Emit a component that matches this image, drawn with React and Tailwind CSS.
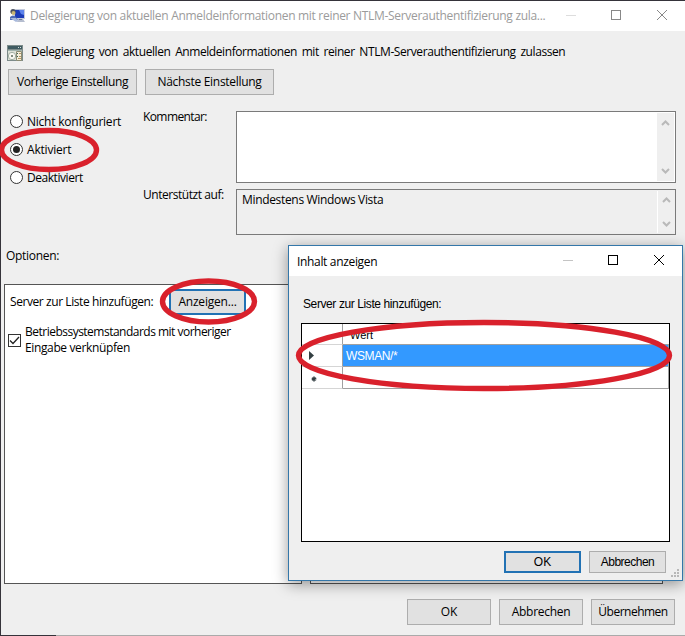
import React from 'react';
import { clsx } from 'clsx';

const ComputerIcon = () => (
  <svg width="17" height="16" viewBox="0 0 17 16" className="shrink-0">
    <path d="M5 1h11v10H5z" fill="#c5cbdc" />
    <path d="M6 2h9v8H6z" fill="#1c3cb8" />
    <path d="M10 2h5v5l-3-1z" fill="#5d83ec" />
    <path d="M9 11h5l2 3H8z" fill="#b5bdcf" />
    <path d="M10 11h3v1h-3z" fill="#707b98" />
    <circle cx="4" cy="3.5" r="2.6" fill="#4a5160" />
    <circle cx="4.5" cy="5" r="2" fill="#c9b774" />
    <path d="M1 9q3-3 6 0l2 3H1z" fill="#4e6cb6" />
    <path d="M1 10l6 4 2-1-2-3z" fill="#a8b9dc" />
  </svg>
);

const PolicyIcon = () => (
  <svg width="16" height="16" viewBox="0 0 16 16" className="shrink-0">
    <path d="M0 0h16v16H0z" fill="#7d8b8a" />
    <path d="M1 1h14v3H1z" fill="#3f5b61" />
    <path d="M11 2h1v1h-1zM13 2h1v1h-1z" fill="#d6dedb" />
    <path d="M1 5h14v10H1z" fill="#dfe3d9" />
    <path d="M1 5h14v1H1z" fill="#a3b5af" />
    <circle cx="5" cy="11" r="3.7" fill="#f7f7f0" stroke="#a2afa3" />
    <circle cx="5" cy="11" r="1" fill="#59695b" />
    <path d="M9.5 6.5h5v9h-5z" fill="#f4eed9" stroke="#8c8c74" />
    <path d="M10 8h1v1h-1zM10 11h1v1h-1z" fill="#3b6559" />
    <path d="M12 8h2v1h-2zM12 11h2v1h-2zM11 13h3v1h-3z" fill="#b49665" />
  </svg>
);

const WindowButtons = ({ color, dim }) => (
  <svg width="103" height="12" viewBox="0 0 103 12" fill="none" shapeRendering="crispEdges" className="-mt-[2px] shrink-0">
    <path d="M0 6.5h10" stroke={dim} />
    <path d="M45.5 1.5h9v9h-9z" stroke={color} />
    <path d="M91 1l10 10M101 1L91 11" stroke={color} shapeRendering="auto" />
  </svg>
);

const Button = ({ className, children }) => (
  <button
    type="button"
    className={clsx('flex shrink-0 items-center justify-center whitespace-nowrap border bg-[#e1e1e1]', className)}
  >
    {children}
  </button>
);

const Radio = ({ label, checked, className }) => (
  <label className="flex h-7 items-center gap-[4px]">
    <span className="flex size-[13px] items-center justify-center rounded-full border border-[#333] bg-white">
      {checked && <span className="size-[7px] rounded-full bg-[#222]" />}
    </span>
    <span className={clsx('pt-[2px]', className)}>{label}</span>
  </label>
);

const ScrollBar = ({ className }) => (
  <div className={clsx('flex w-[17px] flex-col items-center justify-between bg-[#efefef]', className)}>
    <svg width="9" height="6" viewBox="0 0 9 6" fill="none" stroke="#b9b9b9" strokeWidth="2">
      <path d="M1 5l3.5-3.5L8 5" />
    </svg>
    <svg width="9" height="6" viewBox="0 0 9 6" fill="none" stroke="#b9b9b9" strokeWidth="2">
      <path d="M1 1l3.5 3.5L8 1" />
    </svg>
  </div>
);

const ContentDialog = () => (
  <div className="absolute left-[288px] top-[245px] flex h-[336px] w-[395px] flex-col border border-[#3477a9] bg-[#efefef] shadow-[0_3px_14px_rgba(0,0,0,0.4)]">
    <div className="flex h-[30px] shrink-0 items-center justify-between bg-white pl-2 pr-[16px]">
      <span className="pt-[1px] tracking-[-0.33px]">Inhalt anzeigen</span>
      <WindowButtons color="#000" dim="#c4c4c4" />
    </div>
    <div className="flex flex-1 flex-col px-3 font-['Liberation_Sans',sans-serif]">
      <div className="mt-[20px] h-4 pl-[2px] leading-4 tracking-[-0.4px]">Server zur Liste hinzufügen:</div>
      <div className="mt-[11px] h-[219px] w-[369px] border border-black bg-white">
        <div className="grid grid-cols-[41px_1fr] grid-rows-[21px_22px_22px] text-[11px]">
          <div className="border-b border-r border-[#d5d5d5] border-r-[#a0a0a0]" />
          <div className="flex items-center border-b border-[#a0a0a0] pl-[7px] pt-[2px]">Wert</div>
          <div className="flex items-center border-b border-r border-[#d5d5d5] border-r-[#a0a0a0] pl-[7px]">
            <svg width="5" height="9" viewBox="0 0 5 9"><path d="M0 0l5 4.5L0 9z" fill="#333f42" /></svg>
          </div>
          <div className="flex items-center border-b border-r border-[#a0a0a0] bg-[#3399ff] pl-[3px] text-[12px] tracking-[-0.4px] text-white">WSMAN/*</div>
          <div className="flex items-center border-b border-r border-[#d5d5d5] border-r-[#a0a0a0] pl-[9px] pt-[3px]">
            <svg width="6" height="6" viewBox="0 0 6 6" stroke="#333f42" strokeWidth="1.5"><path d="M3 .5v5M.8 1.8l4.4 2.4M.8 4.2l4.4-2.4" /></svg>
          </div>
          <div className="border-b border-r border-[#a0a0a0]" />
        </div>
      </div>
      <div className="mt-[9px] flex justify-end gap-2 pr-1">
        <Button className="h-[22px] w-[77px] border-2 border-[#2272b4]">OK</Button>
        <Button className="h-[22px] w-[77px] border-[#adadad] tracking-[-0.5px]">Abbrechen</Button>
      </div>
    </div>
    <svg width="9" height="9" viewBox="0 0 9 9" fill="#b8b8b8" className="absolute bottom-[2px] right-[2px]">
      <path d="M6 0h2v2H6zM3 3h2v2H3zM6 3h2v2H6zM0 6h2v2H0zM3 6h2v2H3zM6 6h2v2H6z" />
    </svg>
  </div>
);

const Highlights = () => (
  <svg
    width="685"
    height="636"
    viewBox="0 0 685 636"
    fill="none"
    stroke="#d9212c"
    strokeWidth="5.4"
    className="pointer-events-none absolute left-0 top-0"
  >
    <ellipse cx="49" cy="150" rx="47.5" ry="19.5" />
    <ellipse cx="208.5" cy="301.5" rx="46" ry="20.5" />
    <ellipse cx="484" cy="355.5" rx="185.5" ry="33" />
  </svg>
);

const App = () => {
  return (
    <div className="relative h-[636px] w-[685px] overflow-hidden bg-[#35333a] pl-px pt-px font-['Open_Sans','Noto_Sans',sans-serif] text-[12px] leading-4 text-black">
      <div className="flex h-[634px] flex-col bg-[#efefef]">
        <div className="flex h-[30px] shrink-0 items-center justify-between bg-white pl-[8px] pr-[16px]">
          <div className="flex items-center gap-[4px] whitespace-nowrap text-[#9b9b9b]">
            <ComputerIcon />
            <span className="tracking-[-0.305px]">
              Delegierung von aktuellen Anmeldeinformationen mit reiner NTLM-Serverauthentifizierung zula...
            </span>
          </div>
          <WindowButtons color="#888" dim="#ddd" />
        </div>

        <div className="mt-[12px] flex h-5 items-center gap-[8px] whitespace-nowrap pl-[6px]">
          <PolicyIcon />
          <span className="-mt-[3px] tracking-[-0.42px] [word-spacing:2px]">
            Delegierung von aktuellen Anmeldeinformationen mit reiner NTLM-Serverauthentifizierung zulassen
          </span>
        </div>

        <div className="mt-[6px] flex gap-2 pl-[7px]">
          <Button className="h-[26px] w-[129px] border-[#adadad] tracking-[-0.36px]">Vorherige Einstellung</Button>
          <Button className="h-[26px] w-[129px] border-[#adadad] tracking-[-0.3px]">Nächste Einstellung</Button>
        </div>

        <div className="mt-[16px] grid h-[124px] grid-cols-[133px_93px_440px] pl-[9px]">
          <div className="-mt-[4px]">
            <Radio label="Nicht konfiguriert" className="tracking-[-0.23px]" />
            <Radio label="Aktiviert" checked className="tracking-[-0.2px]" />
            <Radio label="Deaktiviert" className="tracking-[-0.45px]" />
          </div>
          <div className="flex flex-col gap-[62px] whitespace-nowrap">
            <span className="-mt-[2px] tracking-[-0.6px]">Kommentar:</span>
            <span className="tracking-[-0.45px]">Unterstützt auf:</span>
          </div>
          <div className="flex flex-col gap-[6px]">
            <div className="flex h-[72px] justify-end border border-[#7a7a7a] bg-white p-px">
              <ScrollBar className="py-[7px]" />
            </div>
            <div className="flex h-[46px] justify-between border border-[#7a7a7a] p-px">
              <span className="pl-1 pt-[1px] tracking-[-0.33px]">Mindestens Windows Vista</span>
              <ScrollBar className="border-l border-white py-[6px]" />
            </div>
          </div>
        </div>

        <div className="mt-[13px] pl-[5px] tracking-[-0.3px]">Optionen:</div>

        <div className="mt-[20px] flex h-[300px] gap-2 pl-[3px]">
          <div className="w-[298px] border border-[#555] bg-white pl-[3px] pt-[4px]">
            <div className="flex items-center gap-[14px] pl-[2px]">
              <span className="w-[145px] whitespace-nowrap tracking-[-0.42px]">Server zur Liste hinzufügen:</span>
              <Button className="h-[26px] w-[77px] border-2 border-[#2272b4] tracking-[-0.2px]">Anzeigen...</Button>
            </div>
            <label className="mt-[9px] flex items-center gap-[4px]">
              <span className="flex size-[13px] shrink-0 items-center justify-center border border-[#333] bg-white">
                <svg width="11" height="11" viewBox="0 0 11 11" fill="none" stroke="#222" strokeWidth="1.3">
                  <path d="M1 5.5l3 3L10 2" />
                </svg>
              </span>
              <span className="flex w-[240px] flex-col whitespace-nowrap">
                <span className="tracking-[-0.51px]">Betriebssystemstandards mit vorheriger</span>
                <span className="tracking-[-0.37px]">Eingabe verknüpfen</span>
              </span>
            </label>
          </div>
          <div className="w-[353px] border border-[#555] bg-white" />
        </div>

        <div className="mt-[15px] flex justify-end gap-2 pr-[10px]">
          <Button className="h-[26px] w-[84px] border-[#adadad]">OK</Button>
          <Button className="h-[26px] w-[84px] border-[#adadad] tracking-[-0.3px]">Abbrechen</Button>
          <Button className="h-[26px] w-[84px] border-[#adadad] tracking-[-0.5px]">Übernehmen</Button>
        </div>
      </div>
      <div className="ml-[55px] h-px bg-[#aaa]" />

      <ContentDialog />
      <Highlights />
    </div>
  );
};

export default App;
